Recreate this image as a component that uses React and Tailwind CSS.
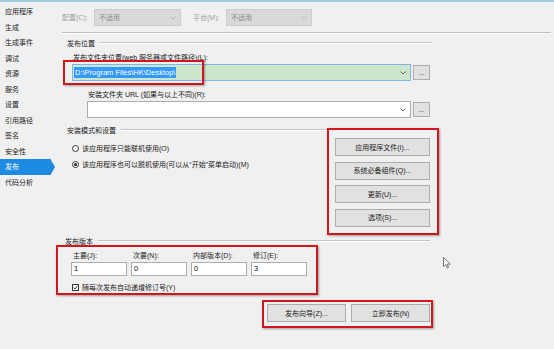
import React from "react";

const navItems = [
  "应用程序",
  "生成",
  "生成事件",
  "调试",
  "资源",
  "服务",
  "设置",
  "引用路径",
  "签名",
  "安全性",
  "发布",
  "代码分析",
];

const Chevron = ({ color = "#555" }) => (
  <svg width="6" height="4" viewBox="0 0 6 4" className="shrink-0">
    <polyline points="0.5,0.5 3,3 5.5,0.5" fill="none" stroke={color} strokeWidth="0.9" />
  </svg>
);

const Btn = ({ children, className = "" }) => (
  <div
    className={`flex items-center justify-center bg-[#e1e1e1] border border-[#adadad] text-[#222] text-[7px] leading-none ${className}`}
  >
    {children}
  </div>
);

const DotsBtn = () => (
  <div className="ml-[2px] w-[17px] h-[15px] bg-[#e1e1e1] border border-[#adadad] flex items-end justify-center pb-[3px] text-[7px] leading-none text-[#333]">
    ...
  </div>
);

const GroupHeader = ({ title, width, pl = "pl-[5px]" }) => (
  <div className={`flex items-center ${width} h-full`}>
    <span className={`${pl} text-[7px] leading-none text-[#222] whitespace-nowrap`}>{title}</span>
    <div className="flex-1 ml-[5px] border-t border-[#c4c4c4] border-b border-b-white" />
  </div>
);

const Radio = ({ checked, label }) => (
  <div className="flex items-center h-[12px] pl-[10px]">
    <div className="w-[7px] h-[7px] rounded-full border border-[#333] bg-white flex items-center justify-center">
      {checked && <div className="w-[3px] h-[3px] rounded-full bg-[#222]" />}
    </div>
    <span className="ml-[3px] text-[7px] leading-none text-[#222] whitespace-nowrap">{label}</span>
  </div>
);

const VersionField = ({ label, value }) => (
  <div className="w-[56px] flex flex-col">
    <div className="h-[10px] flex items-center pl-[2px] text-[7px] leading-none text-[#222] whitespace-nowrap">
      {label}
    </div>
    <div className="mt-[2px] h-[14px] bg-white border border-[#abadb3] flex items-center pl-[2px] text-[7.5px] leading-none text-[#111]">
      {value}
    </div>
  </div>
);

export default function App() {
  return (
    <div className="relative w-[554px] h-[349px] overflow-hidden bg-[#f0f0f0] font-['Liberation_Sans','Noto_Sans_CJK_SC',sans-serif] flex flex-col">
      <div className="h-[2px] bg-[#9fcfe0] shrink-0" />
      <div className="flex flex-1">
        {/* sidebar */}
        <div className="w-[55px] shrink-0 pt-[2px] flex flex-col">
          {navItems.map((item) =>
            item === "发布" ? (
              <div key={item} className="h-[15.5px] flex items-center">
                <div className="w-[51px] h-full bg-[#1e8be3] flex items-center pl-[5px] text-[7px] leading-none text-white">
                  {item}
                </div>
                <div className="w-0 h-0 border-y-[7.75px] border-y-transparent border-l-[4px] border-l-[#1e8be3]" />
              </div>
            ) : (
              <div key={item} className="h-[15.5px] flex items-center pl-[5px] text-[7px] leading-none text-[#222]">
                {item}
              </div>
            )
          )}
        </div>

        {/* main */}
        <div className="flex-1 pl-[7px] flex flex-col">
          {/* config row */}
          <div className="mt-[7px] h-[17px] flex items-center">
            <span className="w-[32px] text-[7px] leading-none text-[#a3a3a3]">配置(C):</span>
            <div className="w-[87px] h-[17px] bg-[#d9d9d9] border border-[#cdcdcd] flex items-center justify-between px-[4px]">
              <span className="text-[7px] leading-none text-[#8c8c8c]">不适用</span>
              <Chevron color="#b5b5b5" />
            </div>
            <span className="ml-[12px] w-[33px] text-[7px] leading-none text-[#a3a3a3]">平台(M):</span>
            <div className="w-[86px] h-[17px] bg-[#d9d9d9] border border-[#cdcdcd] flex items-center justify-between px-[4px]">
              <span className="text-[7px] leading-none text-[#8c8c8c]">不适用</span>
              <Chevron color="#b5b5b5" />
            </div>
          </div>

          <div className="mt-[6px] mr-[3px] border-t border-[#bdbdbd] border-b border-b-white" />

          {/* publish location */}
          <div className="mt-[3px] h-[12px]">
            <GroupHeader title="发布位置" width="w-[370px]" />
          </div>
          <div className="mt-[3px] h-[11px] flex items-center pl-[11px] text-[7px] leading-none text-[#222] whitespace-nowrap">
            发布文件夹位置(web 服务器或文件路径)(L):
          </div>
          <div className="relative mt-[1px] h-[17px] flex items-center">
            <div className="ml-[10px] w-[339px] h-[17px] bg-[#cce8cc] border border-[#7eb4ea] flex items-center justify-between pl-[1px] pr-[4px]">
              <span className="bg-[#3399ff] text-white text-[7.5px] leading-none px-[1px] py-[2px] whitespace-nowrap">
                D:\Program Files\HK\Desktop\
              </span>
              <Chevron />
            </div>
            <DotsBtn />
            <div className="absolute left-[1px] top-[-4px] w-[141px] h-[25px] border-[2px] border-[#d2161e] shadow-[1px_1px_2px_rgba(0,0,0,0.35)]" />
          </div>
          <div className="mt-[8px] h-[11px] flex items-center pl-[26px] text-[7px] leading-none text-[#222] whitespace-nowrap">
            安装文件夹 URL (如果与以上不同)(R):
          </div>
          <div className="mt-[1px] h-[17px] flex items-center">
            <div className="ml-[25px] w-[324px] h-[17px] bg-white border border-[#abadb3] flex items-center justify-end pr-[4px]">
              <Chevron />
            </div>
            <DotsBtn />
          </div>

          {/* install mode */}
          <div className="mt-[6px] flex items-start">
            <div className="w-[265px] flex flex-col">
              <div className="h-[12px]">
                <GroupHeader title="安装模式和设置" width="w-full" />
              </div>
              <div className="mt-[6px]">
                <Radio label="该应用程序只能联机使用(O)" />
              </div>
              <div className="mt-[4px]">
                <Radio checked label="该应用程序也可以脱机使用(可以从“开始”菜单启动)(M)" />
              </div>
            </div>
            <div className="mt-[4px] w-[112px] h-[107px] border-[2px] border-[#d2161e] shadow-[1px_1px_2px_rgba(0,0,0,0.35)] pt-[8px] pl-[6px] flex flex-col gap-[5.5px]">
              <Btn className="w-[95px] h-[18px]">应用程序文件(I)...</Btn>
              <Btn className="w-[95px] h-[18px]">系统必备组件(Q)...</Btn>
              <Btn className="w-[95px] h-[18px]">更新(U)...</Btn>
              <Btn className="w-[95px] h-[18px]">选项(S)...</Btn>
            </div>
          </div>

          {/* version */}
          <div className="mt-[1px] h-[10px]">
            <GroupHeader title="发布版本" width="w-[368px]" pl="pl-[3px]" />
          </div>
          <div className="mt-[-1px] ml-[-6px] w-[262px] h-[50px] border-[2px] border-[#d2161e] shadow-[1px_1px_2px_rgba(0,0,0,0.35)] pt-[3px] flex flex-col">
            <div className="pl-[13px] flex gap-[4px]">
              <VersionField label="主要(J):" value="1" />
              <VersionField label="次要(N):" value="0" />
              <VersionField label="内部版本(D):" value="0" />
              <VersionField label="修订(E):" value="3" />
            </div>
            <div className="mt-[6px] h-[11px] flex items-center pl-[14px]">
              <div className="w-[7px] h-[7px] border border-[#333] bg-white flex items-center justify-center">
                <svg width="5" height="5" viewBox="0 0 5 5">
                  <polyline points="0.6,2.6 2,4 4.5,0.8" fill="none" stroke="#222" strokeWidth="0.9" />
                </svg>
              </div>
              <span className="ml-[3px] text-[7px] leading-none text-[#222] whitespace-nowrap">随每次发布自动递增修订号(Y)</span>
            </div>
          </div>

          {/* publish buttons */}
          <div className="mt-[5px] ml-[200px] w-[171px] h-[28px] border-[2px] border-[#d2161e] shadow-[1px_1px_2px_rgba(0,0,0,0.35)] pt-[2px] pl-[3px] flex gap-[5px]">
            <Btn className="w-[79px] h-[18px]">发布向导(Z)...</Btn>
            <Btn className="w-[79px] h-[18px]">立即发布(N)</Btn>
          </div>
        </div>
      </div>

      {/* mouse cursor */}
      <svg className="absolute left-[443px] top-[257px]" width="9" height="12" viewBox="0 0 9 12">
        <path d="M0.5,0.5 L0.5,9.5 L2.7,7.6 L4.3,11 L5.6,10.4 L4.1,7.1 L7.3,7.1 Z" fill="white" stroke="#555" strokeWidth="0.8" />
      </svg>
    </div>
  );
}
